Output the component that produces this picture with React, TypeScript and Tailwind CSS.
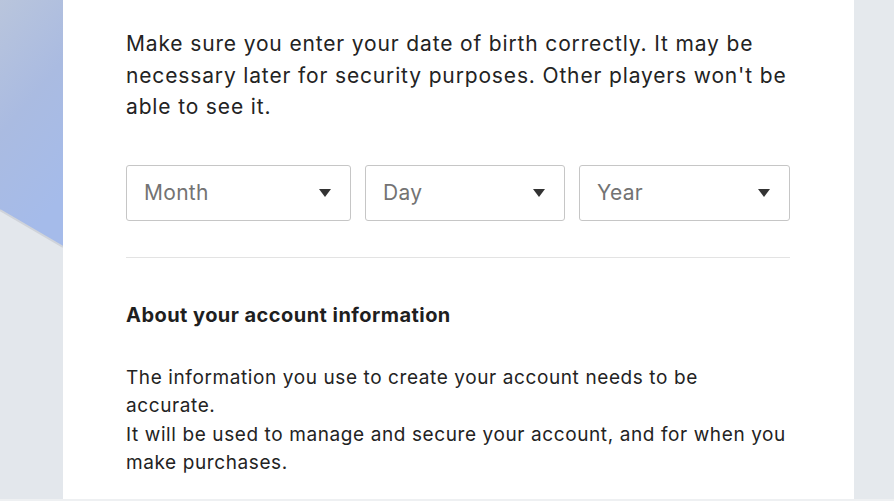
import React from 'react'

const font = { fontFamily: 'Inter, "Liberation Sans", Arial, sans-serif' }

const Caret = () => (
  <svg width="12" height="8" viewBox="0 0 12 8" className="shrink-0">
    <path d="M0 0 L12 0 L6 8 Z" fill="#333" />
  </svg>
)

interface SelectBoxProps {
  label: string
  width: string
}

const SelectBox: React.FC<SelectBoxProps> = ({ label, width }) => (
  <div
    className={`${width} h-[56px] flex items-center justify-between pl-[17px] pr-[19px] rounded-[3px] border border-[#c6c6c6] bg-white`}
  >
    <span className="text-[21px] tracking-[0.3px] text-[#737373]">{label}</span>
    <Caret />
  </div>
)

export default function App() {
  return (
    <div className="w-[894px] h-[501px] flex overflow-hidden bg-[#e5e9ed] border-b-2 border-[#eef0f2]" style={font}>
      {/* left backdrop */}
      <div className="w-[63px] shrink-0 relative bg-[#e3e7ec]">
        <svg width="63" height="501" viewBox="0 0 63 501" className="absolute inset-0">
          <defs>
            <linearGradient id="bl" x1="0" y1="0" x2="0.3" y2="1">
              <stop offset="0" stopColor="#b9c5dc" />
              <stop offset="0.5" stopColor="#aabbe1" />
              <stop offset="1" stopColor="#a5bbea" />
            </linearGradient>
          </defs>
          <path d="M0 0 H63 V247 L0 210 Z" fill="url(#bl)" />
          <path d="M0 210 L63 247" stroke="#cfd3da" strokeWidth="2" />
        </svg>
      </div>

      {/* main panel */}
      <div className="w-[791px] shrink-0 bg-white pl-[63px] pr-[64px] pt-[28px] text-[#232323]">
        <p className="text-[21px] leading-[31.5px] tracking-[0.85px]">
          Make sure you enter your date of birth correctly. It may be necessary later for security purposes. Other
          players won't be able to see it.
        </p>

        <div className="mt-[42px] flex gap-[14px]">
          <SelectBox label="Month" width="w-[225px]" />
          <SelectBox label="Day" width="w-[200px]" />
          <SelectBox label="Year" width="w-[211px]" />
        </div>

        <div className="mt-[36px] h-px bg-[#e3e3e3]" />

        <h3 className="mt-[44px] text-[20px] leading-[26px] tracking-[0.45px] font-bold text-[#1f1f1f]">
          About your account information
        </h3>

        <div className="mt-[36px] text-[19px] leading-[28.5px] tracking-[0.6px]">
          <p>The information you use to create your account needs to be accurate.</p>
          <p>It will be used to manage and secure your account, and for when you make purchases.</p>
        </div>
      </div>

      {/* right backdrop */}
      <div className="flex-1 bg-[#e5e9ed]" />
    </div>
  )
}
